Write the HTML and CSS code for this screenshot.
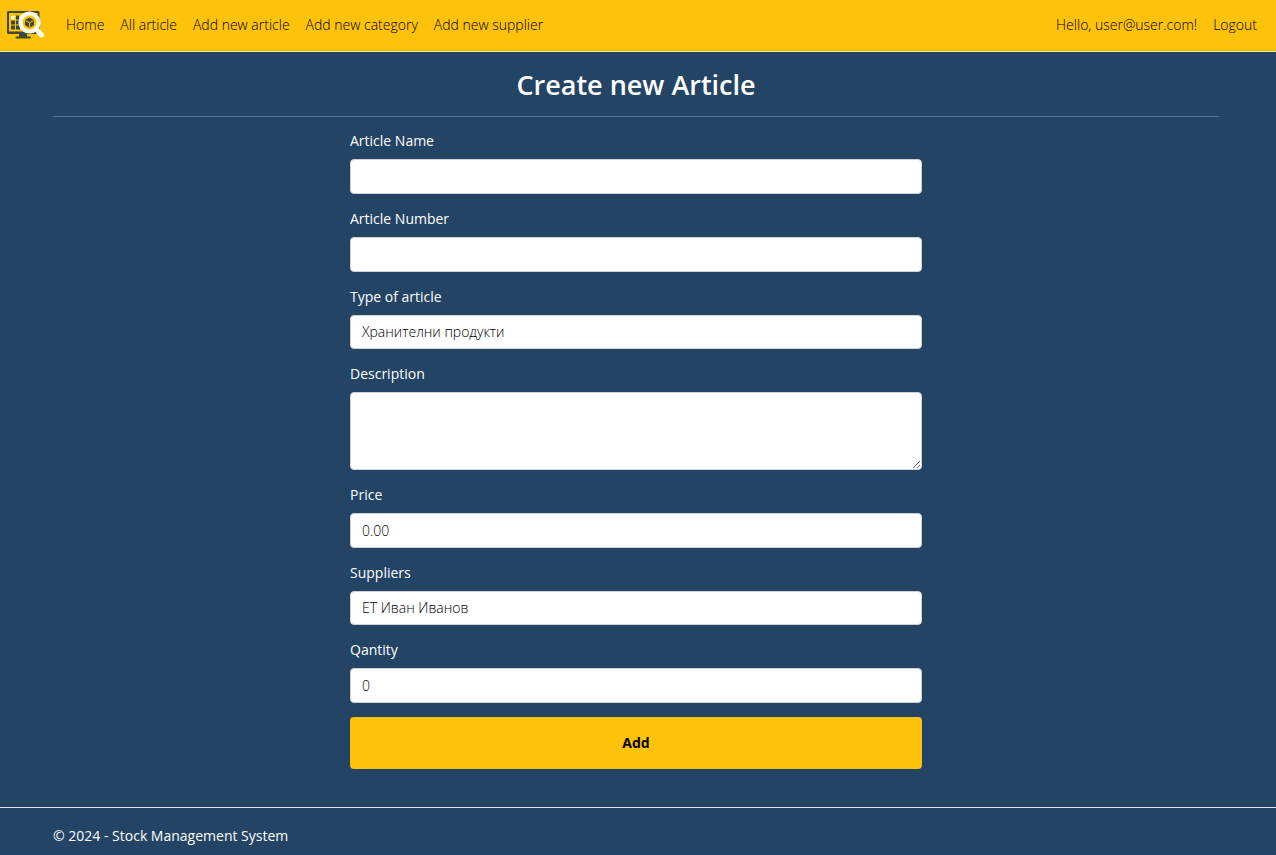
FILE: index.html
```html
<!DOCTYPE html>
<html lang="en">
<head>
<meta charset="utf-8">
<meta name="viewport" content="width=device-width, initial-scale=1">
<title>Create new Article - Stock Management System</title>
<link rel="stylesheet" href="styles.css">
</head>
<body>
<header class="site-header">
  <nav class="navbar">
    <a class="brand" href="#" aria-label="Stock Management System">
      <svg class="logo" viewBox="0 0 38 30" aria-hidden="true">
        <path fill="#3f4a35" fill-rule="evenodd" d="M1.500 1h29.500a1.500 1.500 0 0 1 1.500 1.500v20a1.500 1.500 0 0 1-1.500 1.500H1.500A1.500 1.500 0 0 1 0 22.500v-20A1.500 1.500 0 0 1 1.500 1zM2 3v18.500h28.500V3z"/>
        <path fill="#3f4a35" d="M12 23h8v3.500h3a1 1 0 0 1 0 2H9.500a1 1 0 0 1 0-2H12z"/>
        <path fill="#3f4a35" d="M4 10.500h4v4H4zM4 15.500h4v4H4zM9 10.500h4v4H9zM9 15.500h4v4H9zM9 5.500h3v4H9z"/>
        <path fill="#fff3c4" d="M4 6h4v3.500H4z"/>
        <path stroke="#fffdf0" stroke-width="5" stroke-linecap="round" d="M29.500 19.500l5 5.500"/>
        <circle cx="22.500" cy="12.500" r="9" fill="#ffc20a" stroke="#fffdf0" stroke-width="4"/>
        <path fill="#3f4a35" d="M22.500 7.500l4.500 2.500v5.200l-4.500 2.600-4.500-2.600V10z"/>
        <path fill="none" stroke="#ffc20a" stroke-width="1" d="M18.500 10.500l4 2.300 4-2.300M22.500 12.800v4.500"/>
      </svg>
    </a>
    <ul class="nav-list nav-main">
      <li><a href="#">Home</a></li>
      <li><a href="#">All article</a></li>
      <li><a href="#">Add new article</a></li>
      <li><a href="#">Add new category</a></li>
      <li><a href="#">Add new supplier</a></li>
    </ul>
    <ul class="nav-list">
      <li><a href="#">Hello, user@user.com!</a></li>
      <li><button type="button" class="logout">Logout</button></li>
    </ul>
  </nav>
</header>
<main class="container">
  <h1 class="title">Create new Article</h1>
  <hr class="rule">
  <form class="article-form">
    <div class="field">
      <label for="name">Article Name</label>
      <input class="control" id="name" type="text">
    </div>
    <div class="field">
      <label for="number">Article Number</label>
      <input class="control" id="number" type="text">
    </div>
    <div class="field">
      <label for="type">Type of article</label>
      <select class="control" id="type"><option>Хранителни продукти</option></select>
    </div>
    <div class="field">
      <label for="description">Description</label>
      <textarea class="control" id="description"></textarea>
    </div>
    <div class="field">
      <label for="price">Price</label>
      <input class="control" id="price" type="text" value="0.00">
    </div>
    <div class="field">
      <label for="suppliers">Suppliers</label>
      <select class="control" id="suppliers"><option>ЕТ Иван Иванов</option></select>
    </div>
    <div class="field">
      <label for="quantity">Qantity</label>
      <input class="control" id="quantity" type="text" value="0">
    </div>
    <button type="submit" class="submit">Add</button>
  </form>
</main>
<footer class="site-footer">
  <div class="container">© 2024 - Stock Management System</div>
</footer>
</body>
</html>
```
FILE: styles.css
```css
*, *::before, *::after {
  box-sizing: border-box;
}

body {
  margin: 0;
  min-height: 100vh;
  display: flex;
  flex-direction: column;
  background: #234465;
  color: #fff;
  font-family: "Segoe UI", "Open Sans", "Noto Sans", sans-serif;
  font-size: 14px;
  line-height: 22px;
}

.site-header {
  background: #ffc20a;
  border-bottom: 1px solid #e6e3a4;
}

.navbar {
  display: flex;
  align-items: center;
  min-height: 51px;
  padding: 0 11px 1px 7px;
}

.brand {
  display: flex;
  margin-right: 13px;
}

.logo {
  width: 38px;
  height: 30px;
}

.nav-list {
  display: flex;
  margin: 0;
  padding: 0;
  list-style: none;
}

.nav-main {
  flex: 1;
}

.nav-list a,
.logout {
  display: block;
  padding: 8px;
  border: 0;
  background: none;
  color: #000;
  font: inherit;
  font-weight: 300;
  text-decoration: none;
  white-space: nowrap;
  cursor: pointer;
}

.container {
  width: 100%;
  max-width: 1192px;
  margin: 0 auto;
  padding: 0 15px 0 11px;
}

main.container {
  flex: 1;
  padding-bottom: 36px;
}

.title {
  margin: 16px 0 15px;
  font-size: 27px;
  font-weight: 600;
  line-height: 33px;
  text-align: center;
}

.rule {
  margin: 0 0 13px;
  border: 0;
  border-top: 1px solid #587392;
}

.article-form {
  width: 100%;
  max-width: 572px;
  margin: 0 auto;
}

.field {
  display: flex;
  flex-direction: column;
  gap: 7px;
  margin-bottom: 14px;
}

.control {
  width: 100%;
  height: 35px;
  padding: 5px 11px;
  border: 1px solid #ced4da;
  border-radius: 4px;
  background: #fff;
  color: #000;
  font: inherit;
  font-weight: 300;
  appearance: none;
}

select.control {
  height: 34px;
}

textarea.control {
  height: 78px;
  resize: vertical;
}

.submit {
  width: 100%;
  height: 52px;
  border: 0;
  border-radius: 4px;
  background: #ffc20a;
  color: #000;
  font: inherit;
  font-weight: 700;
  cursor: pointer;
}

.site-footer {
  padding: 17px 0 8px;
  border-top: 1px solid #dee2e6;
}
```
